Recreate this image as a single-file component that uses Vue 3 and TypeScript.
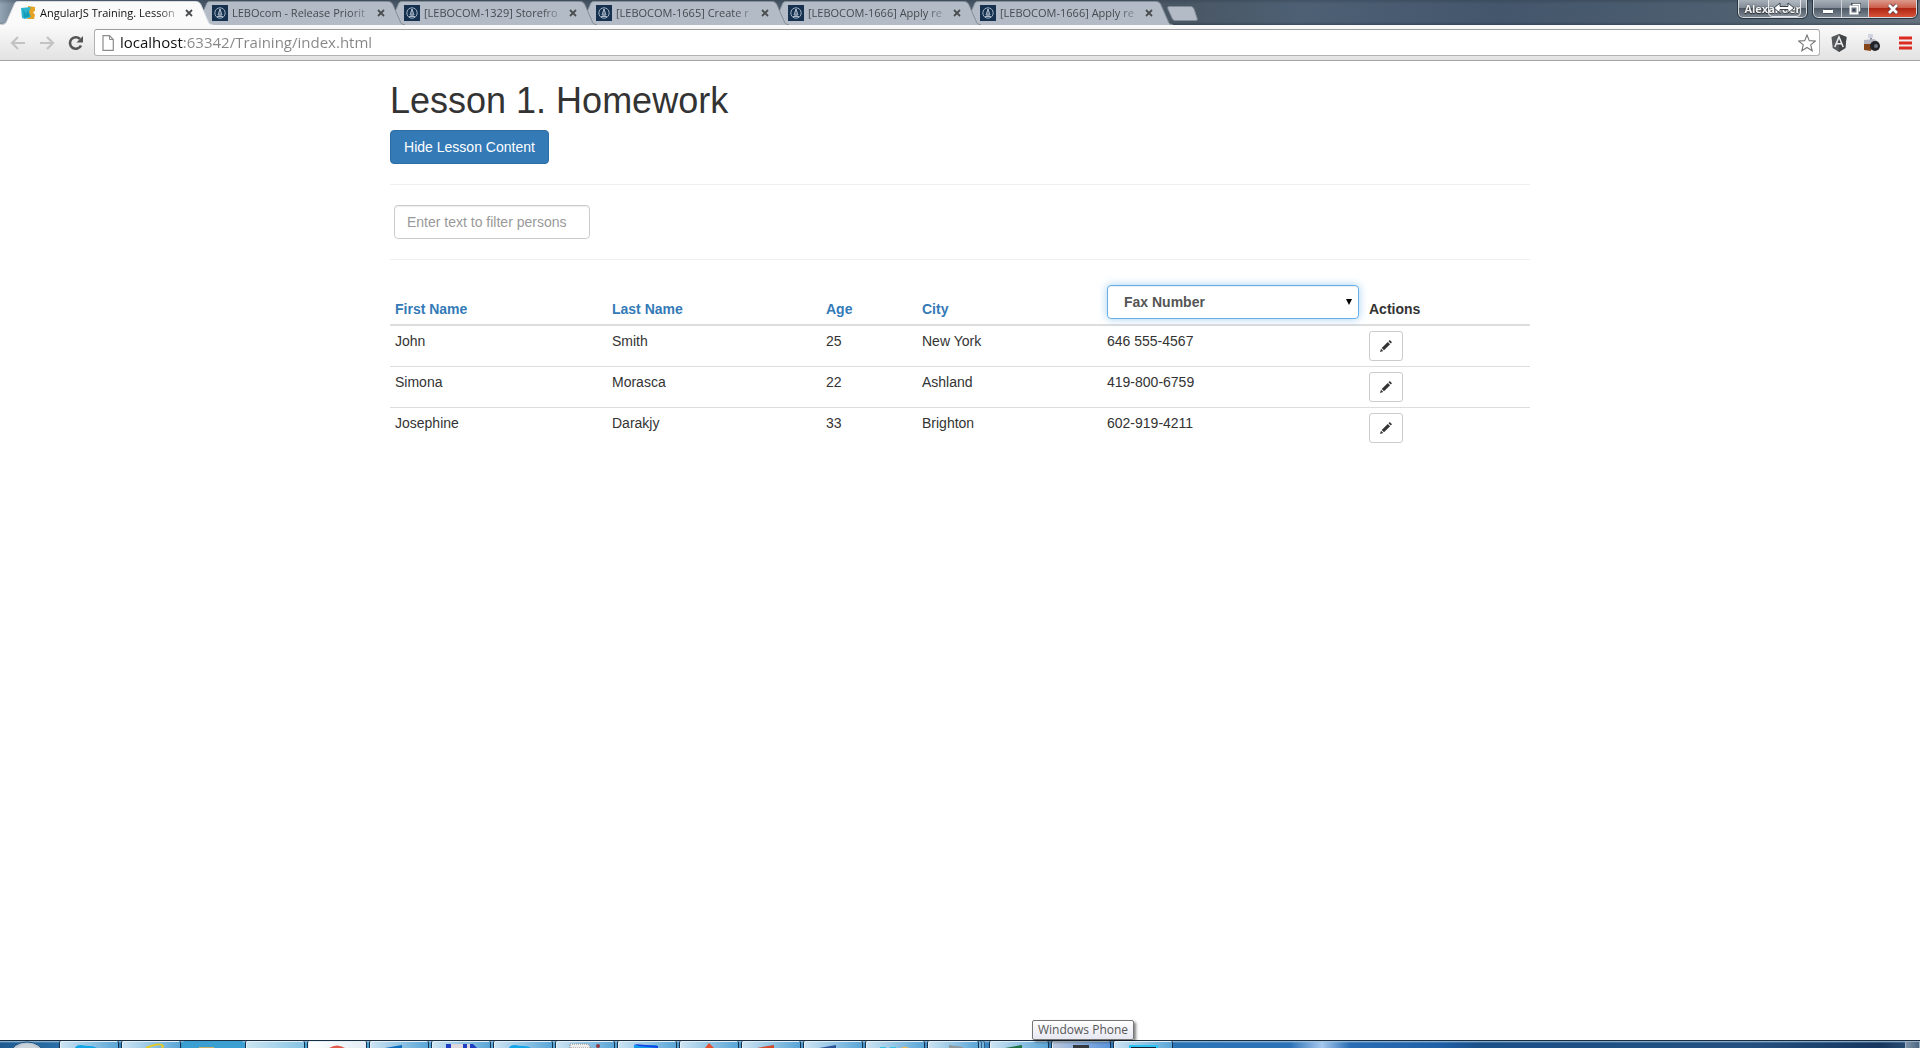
<script setup lang="ts">
import { ref } from 'vue'

interface Person {
  firstName: string
  lastName: string
  age: number
  city: string
  fax: string
}

interface Task {
  name: string
  kind: string
  tone: string
}

const tabs: string[] = [
  'AngularJS Training. Lesson',
  'LEBOcom - Release Priorit',
  '[LEBOCOM-1329] Storefro',
  '[LEBOCOM-1665] Create r',
  '[LEBOCOM-1666] Apply re',
  '[LEBOCOM-1666] Apply re',
]

const people: Person[] = [
  { firstName: 'John', lastName: 'Smith', age: 25, city: 'New York', fax: '646 555-4567' },
  { firstName: 'Simona', lastName: 'Morasca', age: 22, city: 'Ashland', fax: '419-800-6759' },
  { firstName: 'Josephine', lastName: 'Darakjy', age: 33, city: 'Brighton', fax: '602-919-4211' },
]

const tasks: Task[] = [
  { name: 'Skype', kind: 'cloud', tone: 'mid' },
  { name: 'Internet Explorer', kind: 'ie', tone: 'mid' },
  { name: 'Explorer', kind: 'folder', tone: 'flat' },
  { name: 'Desktop', kind: 'none', tone: 'soft' },
  { name: 'Chrome', kind: 'chrome', tone: 'bright' },
  { name: 'Outlook', kind: 'outlook', tone: 'mid' },
  { name: 'Save', kind: 'disk', tone: 'mid' },
  { name: 'Skype call', kind: 'cloud', tone: 'mid' },
  { name: 'Notes', kind: 'notes', tone: 'mid' },
  { name: 'Editor', kind: 'editor', tone: 'mid' },
  { name: 'Git', kind: 'git', tone: 'mid' },
  { name: 'PowerPoint', kind: 'ppt', tone: 'mid' },
  { name: 'Word', kind: 'word', tone: 'mid' },
  { name: 'Messenger', kind: 'dots', tone: 'mid' },
  { name: 'Tools', kind: 'tools', tone: 'stack' },
  { name: 'Excel', kind: 'excel', tone: 'mid' },
  { name: 'Windows Phone', kind: 'phone', tone: 'hover' },
  { name: 'WebStorm', kind: 'screen', tone: 'mid' },
]

const url = ref('localhost:63342/Training/index.html')
const filter = ref('')
const column = ref('fax')
</script>

<template>
  <div class="desktop">
    <header class="browser">
      <div class="strip">
        <nav class="tabs">
          <div v-for="(title, i) in tabs" :key="i" class="tab" :class="{ active: i === 0 }">
            <svg class="shape" viewBox="0 0 213 25" aria-hidden="true">
              <path class="fill" d="M0 25C5 25 6 23 7 21L14 5C15 2 16 1.5 19 1.5H195C199 1.5 200 3 201 5L208 21C209 24 211 25 213 25Z" />
              <path class="edge" d="M0 24.5C5 24.5 6 23 7 21L14 5C15 2 16 1.5 19 1.5H195C199 1.5 200 3 201 5L208 21C209 24 210 24.5 213 24.5" />
            </svg>
            <svg v-if="i === 0" class="favicon" viewBox="0 0 16 16" aria-hidden="true">
              <path d="M8 1L15 2V6L13 7L15 10L14 14L7 14Z" fill="#e5a223" />
              <path d="M1 3L11 2L9 7L11 12L5 14L2 13Z" fill="#2cb5cf" />
              <path d="M3 4L6 9L8 5L10 11L4 13Z" fill="#149bb8" />
            </svg>
            <svg v-else class="favicon" viewBox="0 0 16 16" aria-hidden="true">
              <rect width="16" height="16" fill="#16304f" />
              <circle cx="8" cy="8" r="5.2" fill="none" stroke="#9fb0c2" />
              <path d="M8 4L6 10H10L8 4V11M5 11.500H11" fill="none" stroke="#a9b8c8" />
            </svg>
            <button class="title" type="button">{{ title }}</button>
            <button class="close" type="button" aria-label="Close tab">
              <svg viewBox="0 0 8 8"><path d="M1 1L7 7M7 1L1 7" stroke="#4a4d50" stroke-width="1.8" /></svg>
            </button>
          </div>
        </nav>
        <button class="newtab" type="button" aria-label="New tab">
          <svg viewBox="0 0 31 15">
            <path d="M2 .5H24Q26 .5 27 3L30 12Q31 14.500 29 14.500H8Q6 14.500 5 12L1 3Q0 .5 2 .5Z" fill="#b3bcc6" stroke="#818c98" />
          </svg>
        </button>
        <div class="controls">
          <button class="user" type="button">
            <span>Alexander</span>
            <svg class="resize" viewBox="0 0 33 17" aria-hidden="true">
              <path d="M.5 0V12Q.5 16.500 5 16.500H28Q32.500 16.500 32.500 12V0" fill="#ffffff22" stroke="#e4e8ec" />
              <path d="M6 8L12 3V6.500H20V3L26 8L20 13V9.500H12V13Z" fill="#fff" stroke="#3a434d" />
            </svg>
          </button>
          <div class="window">
            <button class="min" type="button" aria-label="Minimize">
              <svg viewBox="0 0 12 14"><rect x=".5" y="7.500" width="11" height="4" rx="1" fill="#fff" stroke="#4b5560" /></svg>
            </button>
            <button class="max" type="button" aria-label="Restore">
              <svg viewBox="0 0 12 14">
                <path d="M3.500 2.500H10.500V9.500H3.500Z" fill="none" stroke="#404a55" stroke-width="3" />
                <path d="M3.500 2.500H10.500V9.500" fill="none" stroke="#fff" stroke-width="1.600" />
                <rect x="1.500" y="4.500" width="7" height="7" fill="#66717d" stroke="#fff" stroke-width="2" />
                <rect x="4" y="7" width="2" height="2" fill="#333d48" />
              </svg>
            </button>
            <button class="quit" type="button" aria-label="Close window">
              <svg viewBox="0 0 12 14">
                <path d="M2 3L10 11M10 3L2 11" stroke="#5f3a3a" stroke-width="4.500" />
                <path d="M2 3L10 11M10 3L2 11" stroke="#fff" stroke-width="2.800" />
              </svg>
            </button>
          </div>
        </div>
      </div>

      <div class="toolbar">
        <button class="tool" type="button" aria-label="Back">
          <svg viewBox="0 0 16 16"><path d="M8 2L2 8L8 14M2 8H15" fill="none" stroke="#c3c3c3" stroke-width="2.200" /></svg>
        </button>
        <button class="tool" type="button" aria-label="Forward">
          <svg viewBox="0 0 16 16"><path d="M8 2L14 8L8 14M14 8H1" fill="none" stroke="#c3c3c3" stroke-width="2.200" /></svg>
        </button>
        <button class="tool" type="button" aria-label="Reload">
          <svg viewBox="0 0 16 16">
            <path d="M13 10.500A5.800 5.800 0 1 1 12 4" fill="none" stroke="#555" stroke-width="2.600" />
            <path d="M15 1V7.500H8.500Z" fill="#555" />
          </svg>
        </button>
        <div class="address">
          <svg class="page-icon" viewBox="0 0 12 16" aria-hidden="true">
            <path d="M1 .7H7.500L11.300 4.500V15.300H1Z" fill="#fff" stroke="#8c8c8c" stroke-width="1.200" />
            <path d="M7.500 .7V4.500H11.300" fill="none" stroke="#8c8c8c" />
          </svg>
          <input v-model="url" class="url" type="text" aria-label="Address" spellcheck="false" />
          <button class="star" type="button" aria-label="Bookmark">
            <svg viewBox="0 0 18 18"><path d="M9 1L11.300 6.600L17.300 7L12.700 10.900L14.200 16.800L9 13.500L3.800 16.800L5.300 10.900L.7 7L6.700 6.600Z" fill="#fff" stroke="#777" stroke-width="1.100" /></svg>
          </button>
        </div>
        <button class="ext" type="button" aria-label="AngularJS extension">
          <svg viewBox="0 0 18 18">
            <path d="M9 0L16.500 3L15.300 14L9 18L2.700 14L1.500 3Z" fill="#55585a" />
            <path d="M9 0L16.500 3L15.300 14L9 18Z" fill="#424547" />
            <path d="M4.800 13L9 3L13.200 13M6.500 9.700H11.500" fill="none" stroke="#eee" stroke-width="1.500" />
          </svg>
        </button>
        <button class="ext" type="button" aria-label="Screenshot extension">
          <svg viewBox="0 0 18 18">
            <rect x="5" y="0" width="5" height="4" rx="1" fill="#cfd3de" />
            <path d="M7 4H9V7H7Z" fill="#8c8f9a" />
            <path d="M1 6L11 5L16 8V16H1Z" fill="#b5b6c4" />
            <path d="M1 10H8V17L1 16Z" fill="#854519" />
            <circle cx="12" cy="12" r="5" fill="#222329" />
            <circle cx="13" cy="12" r="2" fill="#6d7280" />
          </svg>
        </button>
        <button class="ext" type="button" aria-label="Menu">
          <svg viewBox="0 0 18 18"><path d="M3 4H16M3 9H16M3 14H16" stroke="#dc2b20" stroke-width="3" /></svg>
        </button>
      </div>
    </header>

    <main class="content">
      <h1>Lesson 1. Homework</h1>
      <button class="primary" type="button">Hide Lesson Content</button>
      <hr />
      <div class="filter">
        <input v-model="filter" type="text" placeholder="Enter text to filter persons" aria-label="Enter text to filter persons" />
      </div>
      <hr />
      <table>
        <colgroup>
          <col class="c-first" /><col class="c-last" /><col class="c-age" /><col class="c-city" /><col class="c-detail" /><col />
        </colgroup>
        <thead>
          <tr>
            <th><a href="#first">First Name</a></th>
            <th><a href="#last">Last Name</a></th>
            <th><a href="#age">Age</a></th>
            <th><a href="#city">City</a></th>
            <th>
              <div class="select">
                <select v-model="column" aria-label="Column">
                  <option value="fax">Fax Number</option>
                </select>
                <svg viewBox="0 0 6 6" aria-hidden="true"><path d="M0 0H6L3 6Z" fill="#000" /></svg>
              </div>
            </th>
            <th>Actions</th>
          </tr>
        </thead>
        <tbody>
          <tr v-for="p in people" :key="p.firstName">
            <td>{{ p.firstName }}</td>
            <td>{{ p.lastName }}</td>
            <td>{{ p.age }}</td>
            <td>{{ p.city }}</td>
            <td>{{ p.fax }}</td>
            <td>
              <button class="edit" type="button" :aria-label="'Edit ' + p.firstName">
                <svg viewBox="0 0 12 12">
                  <path d="M0 12L1 8.700L3.300 11Z" fill="#333" />
                  <path d="M1.700 8L7.800 1.900L10.100 4.200L4 10.300Z" fill="#333" />
                  <path d="M8.500 1.200L9.700 0L12 2.300L10.800 3.500Z" fill="#333" />
                </svg>
              </button>
            </td>
          </tr>
        </tbody>
      </table>
    </main>

    <footer class="taskbar">
      <button class="orb" type="button" aria-label="Start">
        <svg viewBox="0 0 60 7"><ellipse cx="27" cy="12" rx="16" ry="11" fill="#b9c6d2" stroke="#1d4f7c" /><ellipse cx="27" cy="13" rx="13" ry="10" fill="#cdd5dc" /></svg>
      </button>
      <button v-for="t in tasks" :key="t.name" class="task" :class="t.tone" type="button" :aria-label="t.name">
        <svg viewBox="0 0 56 6" aria-hidden="true">
          <path v-if="t.kind === 'cloud'" d="M14 6Q15 3 20 3Q24 4 29 4Q33 4 36 6Z" fill="#12a5e8" />
          <path v-if="t.kind === 'ie'" d="M23 6Q37 0 40 4L39 6" fill="none" stroke="#e8cd20" stroke-width="2" />
          <path v-if="t.kind === 'folder'" d="M14 5H29V6H14Z" fill="#c4b06b" />
          <path v-if="t.kind === 'chrome'" d="M20 6Q28 1 36 6Z" fill="#e25a4c" />
          <path v-if="t.kind === 'outlook'" d="M14 6L31 3V6Z" fill="#0c6cbc" />
          <g v-if="t.kind === 'disk'"><path d="M13 2H40L44 6H13Z" fill="#1e3fc4" /><path d="M18 2H30V6H18ZM34 2H37V6H34Z" fill="#ded8dc" /></g>
          <g v-if="t.kind === 'notes'"><path d="M13 2H31L34 6H13Z" fill="#eee" stroke="#888" stroke-dasharray="1 1" /><circle cx="41" cy="4" r="2" fill="#8a3a42" /></g>
          <g v-if="t.kind === 'editor'"><path d="M15 3H38V6H15Z" fill="#119bea" /><path d="M15 2L39 4V6L20 4Z" fill="#1442e4" /></g>
          <path v-if="t.kind === 'git'" d="M24 6L28 1L33 6Z" fill="#e6502c" />
          <path v-if="t.kind === 'ppt'" d="M14 6L31 3V6Z" fill="#d1482b" />
          <path v-if="t.kind === 'word'" d="M14 6L31 3V6Z" fill="#2a5699" />
          <g v-if="t.kind === 'dots'"><path d="M13 5H19V6H13ZM23 5H29V6H23Z" fill="#31c4e4" /><path d="M34 6Q38 3 42 6Z" fill="#e4bd62" /></g>
          <path v-if="t.kind === 'tools'" d="M20 3L34 5V6H20Z" fill="#8f9a9e" />
          <path v-if="t.kind === 'excel'" d="M14 6L31 3V6Z" fill="#1f7145" />
          <path v-if="t.kind === 'phone'" d="M20 3H36V6H20Z" fill="#35383d" />
          <path v-if="t.kind === 'screen'" d="M15 6V4H42V6" fill="#15223a" stroke="#2cc4f2" stroke-width="2" />
        </svg>
        <span v-if="t.tone === 'hover'" class="tooltip">Windows Phone</span>
      </button>
      <button class="show-desktop" type="button" aria-label="Show desktop"></button>
    </footer>
  </div>
</template>

<style>
body { margin: 0; background: #fff; }
</style>

<style scoped>
* { box-sizing: border-box; }
button { margin: 0; padding: 0; border: 0; background: none; font: inherit; color: inherit; }
svg { display: block; }

.desktop {
  display: flex;
  flex-direction: column;
  min-height: 100vh;
  color: #333;
  font: 14px/20px "Liberation Sans", Arial, sans-serif;
}

.strip {
  display: flex;
  height: 25px;
  background:
    linear-gradient(#1f2a3640 0, #1f2a3600 4px, #1f2a3600 22px, #1f2a3660 100%),
    linear-gradient(90deg, #93a5b5 0, #627384 20px, #465566 220px, #4a5866 1200px, #4d6074 1300px, #43566b 1500px, #4d5f70 1720px, #66727e 100%);
}
.tabs { display: flex; padding-right: 21px; }
.tab {
  position: relative;
  isolation: isolate;
  display: flex;
  align-items: center;
  width: 213px;
  height: 25px;
  margin-right: -21px;
  padding: 0 20px;
  color: #454a50;
  font: 11px/16px "Open Sans", "Noto Sans", sans-serif;
}
.tab:nth-child(1) { z-index: 6; }
.tab:nth-child(2) { z-index: 5; }
.tab:nth-child(3) { z-index: 4; }
.tab:nth-child(4) { z-index: 3; }
.tab:nth-child(5) { z-index: 2; }
.shape { position: absolute; inset: 0; z-index: -1; width: 213px; height: 25px; }
.fill { fill: #b3bcc6; }
.edge { fill: none; stroke: #848e99; }
.active .fill { fill: #fafafa; }
.active .edge { stroke: #d8dce0; }
.active { color: #111; }
.favicon { flex: none; width: 16px; height: 16px; margin-right: 4px; }
.title {
  flex: none;
  width: 138px;
  text-align: left;
  white-space: nowrap;
  mask-image: linear-gradient(90deg, #000 118px, #0003 138px);
}
.close { width: 8px; height: 8px; margin-left: 7px; }
.newtab { align-self: flex-start; width: 31px; height: 15px; margin: 6px 0 0 -6px; }
.newtab svg { width: 31px; height: 15px; }

.controls { display: flex; align-items: flex-start; gap: 6px; margin-left: auto; padding-right: 3px; }
.user, .window {
  height: 18px;
  border: 1px solid #d5dae0;
  border-top: 0;
  border-radius: 0 0 5px 5px;
  outline: 1px solid #2b3540;
  background: linear-gradient(#a7afb8 0, #828c97 8px, #4c5763 8px, #7b8590 100%);
}
.user {
  position: relative;
  width: 69px;
  color: #fff;
  font: bold 11px/17px "Open Sans", sans-serif;
  text-shadow: 0 0 2px #222, 0 1px 1px #222;
}
.user span { display: block; opacity: 0.9; text-align: center; }
.resize { position: absolute; top: 0; right: 5px; width: 33px; height: 17px; }
.window { display: flex; overflow: hidden; width: 104px; }
.window button { display: flex; align-items: center; justify-content: center; height: 17px; }
.window svg { width: 12px; height: 14px; }
.window .min { width: 28px; border-right: 1px solid #ccd2d8; }
.window .max { width: 27px; border-right: 1px solid #ccd2d8; }
.window .quit { flex: 1; background: linear-gradient(#dc9a8c 0, #cb5c48 8px, #ad2410 8px, #d8523a 100%); }

.toolbar {
  display: flex;
  align-items: center;
  height: 36px;
  padding: 0 6px 0 10px;
  border-bottom: 1px solid #a3a3a3;
  background: linear-gradient(#fafafa, #e2e2e2);
}
.tool { flex: none; width: 16px; height: 16px; margin-right: 13px; }
.tool:nth-child(3) { margin-right: 10px; }
.tool svg { width: 16px; height: 16px; }
.address {
  display: flex;
  flex: 1;
  align-items: center;
  height: 27px;
  margin-right: 10px;
  padding: 0 3px 0 7px;
  border: 1px solid #b2b2b2;
  border-top-color: #9c9c9c;
  border-radius: 3px;
  background: #fff;
}
.page-icon { flex: none; width: 12px; height: 16px; }
.url {
  flex: 1;
  height: 24px;
  margin: 0 8px 0 6px;
  padding: 0 0 2px;
  border: 0;
  outline: 0;
  background: linear-gradient(90deg, #111 64px, #858585 64px);
  background-clip: text;
  color: transparent;
  font: 15px/22px "Open Sans", "Noto Sans", sans-serif;
}
.star, .star svg { width: 18px; height: 18px; }
.ext { flex: none; width: 18px; height: 18px; margin-left: 15px; }
.address + .ext { margin-left: 0; }
.ext svg { width: 18px; height: 18px; }

.content { flex: 1; width: 100%; max-width: 1170px; margin: 0 auto; padding: 0 15px; }
h1 { margin: 20px 0 10px; font-size: 36px; font-weight: 400; line-height: 39px; }
.primary {
  display: block;
  width: 159px;
  height: 34px;
  padding: 6px 12px;
  border: 1px solid #2e6da4;
  border-radius: 4px;
  background: #337ab7;
  color: #fff;
}
hr { margin: 20px 0; border: 0; border-top: 1px solid #eee; }
.filter { padding-left: 4px; }
.filter input {
  display: block;
  width: 196px;
  height: 34px;
  padding: 6px 12px;
  border: 1px solid #ccc;
  border-radius: 4px;
  box-shadow: inset 0 1px 1px #00000013;
  color: #555;
  font: inherit;
}
.filter input::placeholder { color: #999; }

table { width: 100%; border-spacing: 0; table-layout: fixed; }
.c-first { width: 217px; }
.c-last { width: 214px; }
.c-age { width: 96px; }
.c-city { width: 185px; }
.c-detail { width: 262px; }
th, td { padding: 5px; text-align: left; }
th { border-bottom: 2px solid #ddd; vertical-align: bottom; }
td { vertical-align: top; }
tr + tr td { border-top: 1px solid #ddd; }
th a { color: #337ab7; text-decoration: none; }
.select { position: relative; }
.select select {
  display: block;
  width: 100%;
  height: 34px;
  padding: 6px 16px;
  border: 1px solid #66afe9;
  border-radius: 4px;
  outline: 0;
  appearance: none;
  background: #fff;
  box-shadow: inset 0 1px 1px #00000013, 0 0 8px #66afe999;
  color: #555;
  font: inherit;
}
.select svg { position: absolute; top: 14px; right: 7px; width: 6px; height: 6px; }
.edit {
  display: block;
  width: 34px;
  height: 30px;
  padding: 0 10px;
  border: 1px solid #ccc;
  border-radius: 3px;
  background: #fff;
}
.edit svg { width: 12px; height: 12px; }

.taskbar {
  display: flex;
  height: 8px;
  border-top: 1px solid #1b2d40;
  background:
    linear-gradient(#a5c6de 0, #a5c6de00 2px),
    linear-gradient(90deg, #1e5a90 0, #2b6fa6 60px, #3b9fd2 200px, #5aa9d6 500px, #4590c4 900px, #2a74b6 1180px, #2c72b6 1290px, #a5c8ee 1322px, #2a6db4 1350px, #1f5fa6 1440px, #1b5088 1480px, #245080 1750px, #15365f 1880px, #30557c 100%);
}
.orb { width: 59px; height: 7px; }
.orb svg { width: 60px; height: 7px; }
.task {
  position: relative;
  flex: none;
  width: 60px;
  height: 7px;
  margin-right: 2px;
  padding: 1px 1px 0;
  border: 1px solid #16324c;
  border-width: 0 1px;
  border-radius: 2px 2px 0 0;
  box-shadow: inset 1px 1px #e3f0f8;
  background: linear-gradient(100deg, #cfe5f3, #59a5d6);
}
.task svg { width: 56px; height: 6px; }
.soft { background: linear-gradient(100deg, #cde6f2, #86c4e4); }
.bright { background: linear-gradient(100deg, #fff, #e4edf4); }
.hover { background: linear-gradient(100deg, #bcc9dd, #5a94dc); }
.flat { border-color: transparent; box-shadow: none; background: #3c9fd2; }
.stack { width: 52px; margin-right: 10px; box-shadow: inset 1px 1px #e3f0f8, 2px 0 #78b4d8, 3px 0 #2a5f8c, 5px 0 #78b4d8, 6px 0 #2a5f8c; }
.tooltip {
  position: absolute;
  bottom: 8px;
  left: -20px;
  height: 20px;
  padding: 0 5px;
  border: 1px solid #767676;
  border-radius: 2px;
  background: linear-gradient(#fff, #e6e7f1);
  box-shadow: 2px 2px 3px #00000080;
  color: #575757;
  font: 12px/18px "Open Sans", "Noto Sans", sans-serif;
  white-space: nowrap;
}
.show-desktop { width: 15px; height: 7px; margin-left: auto; border: 1px solid #9cb0c4; border-bottom: 0; background: linear-gradient(90deg, #7d92a8, #4c6680); }
</style>
